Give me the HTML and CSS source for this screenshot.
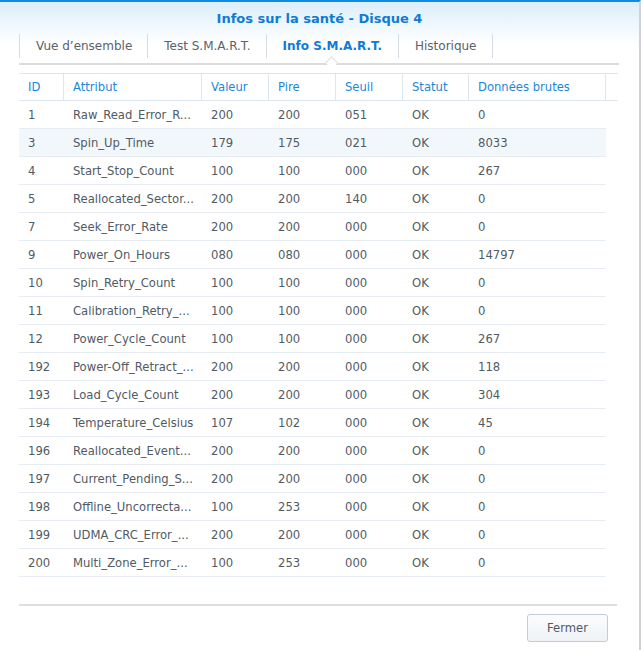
FILE: index.html
```html
<!DOCTYPE html>
<html lang="fr">
<head>
<meta charset="utf-8">
<title>Infos sur la santé - Disque 4</title>
<link rel="stylesheet" href="styles.css">
</head>
<body>
<div class="window">
  <div class="title">Infos sur la santé - Disque 4</div>
  <div class="tabbar">
    <div class="tab">Vue d’ensemble</div>
    <div class="tab">Test S.M.A.R.T.</div>
    <div class="tab active">Info S.M.A.R.T.<span class="notch"></span></div>
    <div class="tab last">Historique</div>
  </div>
  <div class="gridwrap">
    <div class="row head">
      <div class="cell">ID</div>
      <div class="cell">Attribut</div>
      <div class="cell">Valeur</div>
      <div class="cell">Pire</div>
      <div class="cell">Seuil</div>
      <div class="cell">Statut</div>
      <div class="cell">Données brutes</div>
      <div class="cell filler"></div>
    </div>
    <div class="body">
      <div class="row"><div class="cell">1</div><div class="cell">Raw_Read_Error_R...</div><div class="cell">200</div><div class="cell">200</div><div class="cell">051</div><div class="cell">OK</div><div class="cell">0</div></div>
      <div class="row hover"><div class="cell">3</div><div class="cell">Spin_Up_Time</div><div class="cell">179</div><div class="cell">175</div><div class="cell">021</div><div class="cell">OK</div><div class="cell">8033</div></div>
      <div class="row"><div class="cell">4</div><div class="cell">Start_Stop_Count</div><div class="cell">100</div><div class="cell">100</div><div class="cell">000</div><div class="cell">OK</div><div class="cell">267</div></div>
      <div class="row"><div class="cell">5</div><div class="cell">Reallocated_Sector...</div><div class="cell">200</div><div class="cell">200</div><div class="cell">140</div><div class="cell">OK</div><div class="cell">0</div></div>
      <div class="row"><div class="cell">7</div><div class="cell">Seek_Error_Rate</div><div class="cell">200</div><div class="cell">200</div><div class="cell">000</div><div class="cell">OK</div><div class="cell">0</div></div>
      <div class="row"><div class="cell">9</div><div class="cell">Power_On_Hours</div><div class="cell">080</div><div class="cell">080</div><div class="cell">000</div><div class="cell">OK</div><div class="cell">14797</div></div>
      <div class="row"><div class="cell">10</div><div class="cell">Spin_Retry_Count</div><div class="cell">100</div><div class="cell">100</div><div class="cell">000</div><div class="cell">OK</div><div class="cell">0</div></div>
      <div class="row"><div class="cell">11</div><div class="cell">Calibration_Retry_...</div><div class="cell">100</div><div class="cell">100</div><div class="cell">000</div><div class="cell">OK</div><div class="cell">0</div></div>
      <div class="row"><div class="cell">12</div><div class="cell">Power_Cycle_Count</div><div class="cell">100</div><div class="cell">100</div><div class="cell">000</div><div class="cell">OK</div><div class="cell">267</div></div>
      <div class="row"><div class="cell">192</div><div class="cell">Power-Off_Retract_...</div><div class="cell">200</div><div class="cell">200</div><div class="cell">000</div><div class="cell">OK</div><div class="cell">118</div></div>
      <div class="row"><div class="cell">193</div><div class="cell">Load_Cycle_Count</div><div class="cell">200</div><div class="cell">200</div><div class="cell">000</div><div class="cell">OK</div><div class="cell">304</div></div>
      <div class="row"><div class="cell">194</div><div class="cell">Temperature_Celsius</div><div class="cell">107</div><div class="cell">102</div><div class="cell">000</div><div class="cell">OK</div><div class="cell">45</div></div>
      <div class="row"><div class="cell">196</div><div class="cell">Reallocated_Event...</div><div class="cell">200</div><div class="cell">200</div><div class="cell">000</div><div class="cell">OK</div><div class="cell">0</div></div>
      <div class="row"><div class="cell">197</div><div class="cell">Current_Pending_S...</div><div class="cell">200</div><div class="cell">200</div><div class="cell">000</div><div class="cell">OK</div><div class="cell">0</div></div>
      <div class="row"><div class="cell">198</div><div class="cell">Offline_Uncorrecta...</div><div class="cell">100</div><div class="cell">253</div><div class="cell">000</div><div class="cell">OK</div><div class="cell">0</div></div>
      <div class="row"><div class="cell">199</div><div class="cell">UDMA_CRC_Error_...</div><div class="cell">200</div><div class="cell">200</div><div class="cell">000</div><div class="cell">OK</div><div class="cell">0</div></div>
      <div class="row"><div class="cell">200</div><div class="cell">Multi_Zone_Error_...</div><div class="cell">100</div><div class="cell">253</div><div class="cell">000</div><div class="cell">OK</div><div class="cell">0</div></div>
    </div>
  </div>
  <div class="footer">
    <button class="btn">Fermer</button>
  </div>
</div>
</body>
</html>
```

FILE: styles.css
```css
html, body {
  margin: 0;
  padding: 0;
  background: #ffffff;
}
body {
  width: 641px;
  height: 650px;
  overflow: hidden;
  font-family: "DejaVu Sans", Verdana, sans-serif;
  font-size: 11.6px;
  color: #505a64;
}
.window {
  box-sizing: border-box;
  width: 641px;
  height: 650px;
  border-top: 2px solid #0d8ae6;
  border-right: 2px solid #cfd3d8;
  background: linear-gradient(to bottom, #dbeefc 0px, #ffffff 42px);
  display: flex;
  flex-direction: column;
}
.title {
  height: 32px;
  display: flex;
  align-items: center;
  justify-content: center;
  font-weight: bold;
  font-size: 13px;
  color: #0f7bd4;
}
.tabbar {
  margin: 0 20px 0 19px;
  height: 31px;
  box-sizing: border-box;
  display: flex;
  align-items: flex-start;
  border-bottom: 2px solid #dcdcdc;
}
.tab {
  position: relative;
  height: 24px;
  padding: 0 15px 0 16px;
  display: flex;
  align-items: center;
  border-left: 1px solid #d6dde4;
  color: #59626b;
  font-size: 12px;
}
.tab.last {
  border-right: 1px solid #d6dde4;
}
.tab.active {
  color: #0f7bd4;
  font-weight: bold;
  font-size: 12px;
  padding: 0 16px 0 16px;
}
.notch {
  position: absolute;
  left: 50%;
  bottom: -9px;
  width: 8px;
  height: 8px;
  margin-left: -5px;
  background: #ffffff;
  border-left: 1px solid #dcdcdc;
  border-top: 1px solid #dcdcdc;
  transform: rotate(45deg);
}
.gridwrap {
  margin: 8px 22px 0 19px;
  flex: 1;
  border-bottom: 2px solid #dedede;
}
.row {
  display: grid;
  grid-template-columns: 45px 138px 67px 67px 67px 66px 137px;
  height: 28px;
  box-sizing: border-box;
  border-bottom: 1px solid #e6ecf2;
  width: 587px;
}
.row.head {
  grid-template-columns: 45px 138px 67px 67px 67px 66px 137px 12px;
  width: 599px;
  border-top: 1px solid #dde6ef;
  border-bottom: 1px solid #dde6ef;
  height: 28px;
}
.row.head .cell {
  color: #1b87d9;
  border-right: 1px solid #dde6ef;
}
.row.head .cell.filler {
  border-right: none;
}
.row.hover {
  background: #f2f7fc;
}
.cell {
  padding: 0 0 0 9px;
  display: flex;
  align-items: center;
  white-space: nowrap;
  min-width: 0;
}
.body .cell {
  display: block;
  line-height: 28px;
}
.footer {
  height: 44px;
  display: flex;
  justify-content: flex-end;
  align-items: flex-start;
  padding: 8px 31px 0 0;
  box-sizing: border-box;
}
.btn {
  width: 81px;
  height: 28px;
  border: 1px solid #c3ccd6;
  border-radius: 3px;
  background: linear-gradient(to bottom, #fbfcfd, #eef2f6);
  font-family: "DejaVu Sans", Verdana, sans-serif;
  font-size: 11.6px;
  color: #505a64;
  padding: 0;
}
```
